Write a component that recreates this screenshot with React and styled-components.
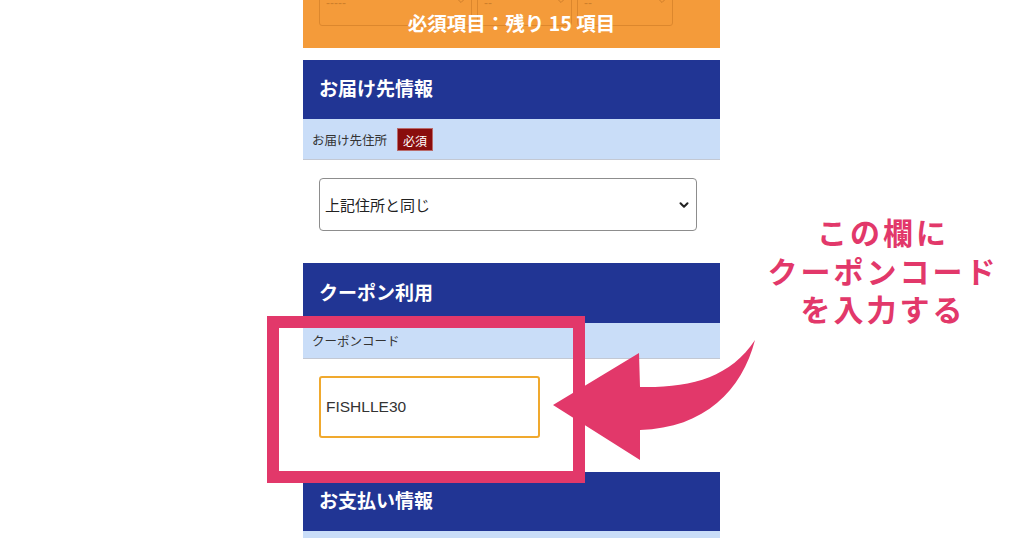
import React from "react";
import styled, { createGlobalStyle } from "styled-components";
import { ChevronDown } from "lucide-react";

const GlobalStyle = createGlobalStyle`
  html, body {
    margin: 0;
    padding: 0;
    background: #fff;
  }
  body {
    font-family: "Noto Sans CJK JP", "Noto Sans", sans-serif;
  }
`;

const Stage = styled.div`
  position: relative;
  width: 1024px;
  height: 538px;
  overflow: hidden;
  background: #fff;
`;

const Column = styled.div`
  width: 417px;
  margin-left: 303px;
`;

/* sticky orange bar over the date selects */
const NoticeBar = styled.div`
  position: relative;
  height: 48px;
  background: #f49b3a;
  overflow: hidden;
`;

const GhostRow = styled.div`
  display: flex;
  gap: 5px;
  padding-left: 16px;
  margin-top: -26px;
  opacity: 0.3;
`;

const GhostSelect = styled.div`
  position: relative;
  width: ${(p) => p.w}px;
  height: 52px;
  border: 1px solid #a85a10;
  border-radius: 3px;
  box-sizing: border-box;
  font-family: "Liberation Sans", sans-serif;
  font-size: 12px;
  line-height: 12px;
  color: #7a3e08;
  padding: 22px 0 0 6px;
  .chev {
    position: absolute;
    right: 4px;
    top: 20px;
  }
`;

const NoticeText = styled.div`
  position: absolute;
  inset: 0;
  display: flex;
  align-items: center;
  justify-content: center;
  padding: 0 0 4px 0;
  color: #fff;
  font-size: 19.5px;
  font-weight: 700;
`;

const SectionHead = styled.div`
  height: ${(p) => p.h || 59}px;
  margin-top: ${(p) => p.mt || 0}px;
  background: #213594;
  color: #fff;
  font-size: 19px;
  font-weight: 700;
  display: flex;
  align-items: center;
  padding: 0 0 4px 16px;
  box-sizing: border-box;
`;

const LabelRow = styled.div`
  height: ${(p) => p.h}px;
  background: #c9ddf8;
  border-bottom: 1px solid #c3c8d3;
  box-sizing: border-box;
  display: flex;
  align-items: center;
  gap: 10px;
  padding-left: 9px;
  font-size: 12.5px;
  color: #333;
`;

const Badge = styled.span`
  background: #8a0d0d;
  color: #fff;
  font-size: 12px;
  padding: 0 5px;
  height: 23px;
  line-height: 23px;
  border: 1px solid #b96a6a;
  box-sizing: border-box;
`;

const FieldArea = styled.div`
  padding: ${(p) => p.pad};
`;

const SelectWrap = styled.div`
  position: relative;
  width: 378px;
  .chev {
    position: absolute;
    right: 6px;
    top: 20px;
    pointer-events: none;
  }
`;

const Select = styled.select`
  appearance: none;
  width: 100%;
  height: 53px;
  border: 1px solid #8d8d8d;
  border-radius: 4px;
  background: #fff;
  font-family: "Noto Sans CJK JP", sans-serif;
  font-size: 15px;
  color: #222;
  padding: 0 5px;
`;

const CodeInput = styled.input`
  width: 221px;
  height: 62px;
  box-sizing: border-box;
  border: 2px solid #f0a92e;
  border-radius: 3px;
  padding: 0 5px;
  font-family: "Liberation Sans", sans-serif;
  font-size: 15.5px;
  color: #333;
  outline: none;
`;

/* annotation layer */
const Frame = styled.div`
  position: absolute;
  left: 267px;
  top: 316px;
  width: 318px;
  height: 167px;
  box-sizing: border-box;
  border: 12px solid #e2386a;
`;

const ArrowSvg = styled.svg`
  position: absolute;
  left: 0;
  top: 0;
`;

const Callout = styled.div`
  position: absolute;
  left: 760px;
  top: 212px;
  width: 246px;
  text-align: center;
  color: #e2386a;
  font-size: 30px;
  font-weight: 700;
  letter-spacing: 3px;
`;

const CalloutLine = styled.div`
  height: 38.5px;
  line-height: 38.5px;
  white-space: nowrap;
`;

export default function App() {
  return (
    <Stage>
      <GlobalStyle />
      <Column>
        <NoticeBar>
          <GhostRow>
            <GhostSelect w={153}>
              -----
              <ChevronDown className="chev" size={12} strokeWidth={2} />
            </GhostSelect>
            <GhostSelect w={95}>
              --
              <ChevronDown className="chev" size={12} strokeWidth={2} />
            </GhostSelect>
            <GhostSelect w={96}>
              --
              <ChevronDown className="chev" size={12} strokeWidth={2} />
            </GhostSelect>
          </GhostRow>
          <NoticeText>必須項目：残り 15 項目</NoticeText>
        </NoticeBar>

        <SectionHead mt={12}>お届け先情報</SectionHead>
        <LabelRow h={41}>
          お届け先住所
          <Badge>必須</Badge>
        </LabelRow>
        <FieldArea pad="18px 0 32px 16px">
          <SelectWrap>
            <Select defaultValue="same">
              <option value="same">上記住所と同じ</option>
            </Select>
            <ChevronDown className="chev" size={14} strokeWidth={3.5} color="#222" />
          </SelectWrap>
        </FieldArea>

        <SectionHead h={60}>クーポン利用</SectionHead>
        <LabelRow h={36}>クーポンコード</LabelRow>
        <FieldArea pad="17px 0 34px 16px">
          <CodeInput defaultValue="FISHLLE30" readOnly />
        </FieldArea>

        <SectionHead>お支払い情報</SectionHead>
        <LabelRow h={30} />
      </Column>

      <Frame />
      <ArrowSvg width="1024" height="538" viewBox="0 0 1024 538">
        <path
          d="M553 405 L639 353 L640 387 C690 388 730 378 755 340 C742 390 705 428 640 430 L640 460 Z"
          fill="#e2386a"
        />
      </ArrowSvg>
      <Callout>
        <CalloutLine>この欄に</CalloutLine>
        <CalloutLine>クーポンコード</CalloutLine>
        <CalloutLine>を入力する</CalloutLine>
      </Callout>
    </Stage>
  );
}
